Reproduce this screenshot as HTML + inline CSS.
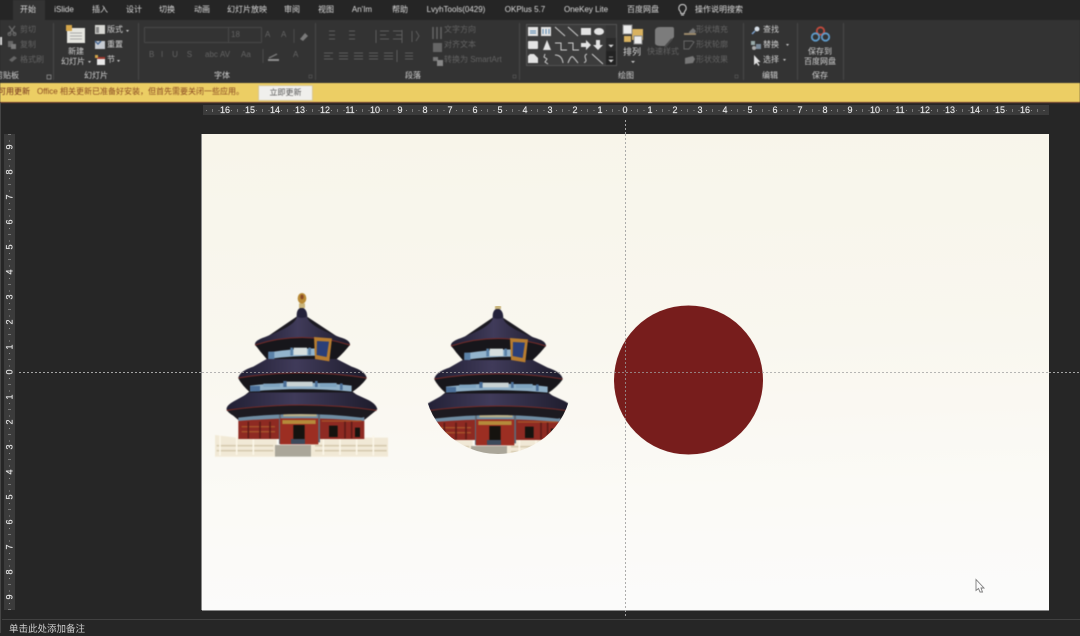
<!DOCTYPE html>
<html lang="zh">
<head>
<meta charset="utf-8">
<title>PowerPoint</title>
<style>
html,body{margin:0;padding:0;background:#262626}
body{width:1080px;height:633px;position:relative;overflow:hidden;font-family:"Liberation Sans","Noto Sans CJK SC",sans-serif;font-size:8px;color:#d2d2d2}
.abs,.t,.d,.c,.dc{position:absolute;white-space:nowrap;line-height:10px}
.d,.dc{color:#636363}
.c,.dc{transform:translateX(-50%);text-align:center}
.tab{color:#dcdcdc;top:5px}
.sep{position:absolute;top:23px;height:57px;width:1px;background:#484848}
#soft{position:absolute;left:0;top:0;width:1080px;height:103px;filter:blur(.4px)}
svg{position:absolute;left:0;top:0}
</style>
</head>
<body>
<div id="soft">
<div class="abs" style="left:0;top:0;width:1080px;height:20px;background:#252525"></div>
<div class="abs" style="left:0;top:20px;width:1080px;height:63px;background:#333"></div>
<div class="abs" style="left:13px;top:0;width:32px;height:20px;background:#333"></div>

<div class="c tab" style="left:28px">开始</div>
<div class="c tab" style="left:64px">iSlide</div>
<div class="c tab" style="left:100px">插入</div>
<div class="c tab" style="left:134px">设计</div>
<div class="c tab" style="left:167px">切换</div>
<div class="c tab" style="left:202px">动画</div>
<div class="c tab" style="left:247px">幻灯片放映</div>
<div class="c tab" style="left:292px">审阅</div>
<div class="c tab" style="left:326px">视图</div>
<div class="c tab" style="left:362px">An'Im</div>
<div class="c tab" style="left:400px">帮助</div>
<div class="c tab" style="left:456px">LvyhTools(0429)</div>
<div class="c tab" style="left:525px">OKPlus 5.7</div>
<div class="c tab" style="left:586px">OneKey Lite</div>
<div class="c tab" style="left:643px">百度网盘</div>
<div class="t tab" style="left:695px">操作说明搜索</div>

<div class="sep" style="left:53px"></div>
<div class="sep" style="left:138px"></div>
<div class="sep" style="left:315px"></div>
<div class="sep" style="left:519px"></div>
<div class="sep" style="left:743px"></div>
<div class="sep" style="left:797px"></div>
<div class="sep" style="left:843px"></div>

<!-- clipboard -->
<div class="d" style="left:20px;top:25px">剪切</div>
<div class="d" style="left:20px;top:40px">复制</div>
<div class="d" style="left:20px;top:55px">格式刷</div>
<div class="t" style="left:-5px;top:71px;color:#cfcfcf">剪贴板</div>
<!-- slides -->
<div class="c" style="left:76px;top:47px">新建</div>
<div class="t" style="left:61px;top:57px">幻灯片</div>
<div class="t" style="left:107px;top:25px">版式</div>
<div class="t" style="left:107px;top:40px">重置</div>
<div class="t" style="left:107px;top:55px">节</div>
<div class="c" style="left:96px;top:71px">幻灯片</div>
<!-- font -->
<div class="d" style="left:231px;top:30px">18</div>
<div class="d" style="left:149px;top:50px">B&nbsp;&nbsp;&nbsp;I&nbsp;&nbsp;&nbsp;&nbsp;U&nbsp;&nbsp;&nbsp;&nbsp;S</div>
<div class="d" style="left:205px;top:50px">abc</div>
<div class="d" style="left:220px;top:50px">AV</div>
<div class="d" style="left:241px;top:50px">Aa</div>
<div class="d" style="left:293px;top:50px">A</div>
<div class="d" style="left:265px;top:30px">A</div>
<div class="d" style="left:281px;top:30px">A</div>
<div class="c" style="left:222px;top:71px">字体</div>
<!-- paragraph -->
<div class="d" style="left:444px;top:25px">文字方向</div>
<div class="d" style="left:444px;top:40px">对齐文本</div>
<div class="d" style="left:444px;top:55px">转换为 SmartArt</div>
<div class="c" style="left:413px;top:71px">段落</div>
<!-- draw -->
<div class="c" style="left:632px;top:47px;font-size:9px;color:#dcdcdc">排列</div>
<div class="dc" style="left:663px;top:47px">快速样式</div>
<div class="d" style="left:696px;top:25px">形状填充</div>
<div class="d" style="left:696px;top:40px">形状轮廓</div>
<div class="d" style="left:696px;top:55px">形状效果</div>
<div class="c" style="left:626px;top:71px">绘图</div>
<!-- edit -->
<div class="t" style="left:763px;top:25px">查找</div>
<div class="t" style="left:763px;top:40px">替换</div>
<div class="t" style="left:763px;top:55px">选择</div>
<div class="c" style="left:770px;top:71px">编辑</div>
<!-- save -->
<div class="c" style="left:820px;top:47px">保存到</div>
<div class="c" style="left:820px;top:57px">百度网盘</div>
<div class="c" style="left:820px;top:71px">保存</div>

<svg width="1080" height="103" viewBox="0 0 1080 103" fill="none">
 <!-- bulb -->
 <path d="M680 11c-2-2-1.500-6.500 2.500-6.500s4.500 4.500 2.500 6.500c-.7.800-.8 1.500-.8 2.500h-3.400c0-1-.1-1.700-.8-2.500zM681 15h3" stroke="#d8d8d8" stroke-width="1"/>
 <!-- clipboard icons -->
 <path d="M9 26l6 8M15 26l-6 8" stroke="#6a6a6a" stroke-width="1.300"/>
 <circle cx="9.500" cy="34" r="1.500" stroke="#6a6a6a"/><circle cx="14.500" cy="34" r="1.500" stroke="#6a6a6a"/>
 <rect x="8" y="41" width="5" height="6" fill="#666"/><rect x="11" y="44" width="5" height="5" fill="#7a7a7a"/>
 <path d="M9 60l5-4 3 2-5 4z" fill="#666"/>
 <rect x="0" y="37" width="2" height="8" fill="#ddd"/>
 <!-- new slide -->
 <rect x="67" y="28" width="18" height="15" fill="#e6e6e0"/>
 <path d="M70 33h12M70 36h12M70 39h12" stroke="#a8a8a8"/>
 <rect x="66" y="25" width="6" height="6" fill="#d5a64a"/>
 <!-- layout etc -->
 <rect x="95" y="25" width="10" height="9" fill="#d8d8d4"/><rect x="96" y="27" width="3" height="6" fill="#888"/>
 <rect x="95" y="41" width="10" height="8" fill="#c8ccd2"/><path d="M95 41l3 3 3-3" stroke="#4a6a96" stroke-width="1.500"/>
 <rect x="97" y="57" width="8" height="8" fill="#e8e8e8"/><rect x="97" y="57" width="8" height="2" fill="#a03a30"/><rect x="95" y="55" width="3" height="3" fill="#d5a64a"/>
 <path d="M126 30h3l-1.500 2zM88 61h3l-1.500 2zM117 60h3l-1.500 2z" fill="#ccc"/>
 <!-- font inputs -->
 <rect x="144.500" y="27.500" width="117" height="15" stroke="#474747"/>
 <path d="M228.500 28v14" stroke="#474747"/>
 <path d="M294 29v14M263 49v14" stroke="#4a4a4a"/>
 <path d="M300 39l5-6 3 3-5 5z" fill="#7a7a7a"/>
 <path d="M269 58l8-4" stroke="#777" stroke-width="1.500"/><rect x="268" y="59" width="11" height="2" fill="#909090"/>
 <!-- paragraph icons -->
 <g stroke="#5c5c5c">
  <path d="M329 31h6M329 35h6M329 39h6M349 31h6M349 35h6M349 39h6"/>
  <path d="M324 53h9M324 56h6M324 59h9M339 53h9M339 56h9M339 59h9M354 53h9M354 56h9M354 59h9M369 53h9M369 56h9M369 59h9M384 53h9M384 56h9M384 59h9M405 53h8M405 56h8M405 59h8"/>
  <path d="M376 30v13M402 30v13M397 50v12" />
  <path d="M376 31h9M376 35h6M376 39h9M389 31h9M392 35h6M389 39h9" transform="translate(4 0)"/>
  <path d="M412 31v11M416 31l3 5-3 5"/>
 </g>
 <path d="M433 27v12M437 27v12M441 27v12" stroke="#666" stroke-width="1.500"/>
 <path d="M433 43h9v9h-9z" fill="#666"/>
 <rect x="433" y="57" width="5" height="4" fill="#777"/><rect x="437" y="60" width="6" height="6" fill="#888"/>
 <!-- shape gallery -->
 <rect x="526.500" y="24.500" width="90" height="41" fill="#3c3c3c" stroke="#525252"/>
 <rect x="606" y="25" width="10" height="13" fill="#363636"/>
 <rect x="606" y="38" width="10" height="13" fill="#2a2a2a"/>
 <rect x="606" y="51" width="10" height="14" fill="#222"/>
 <path d="M609 45h4l-2 2zM609 57h4M609 60h4l-2 2z" fill="#ddd" stroke="#ddd" stroke-width=".6"/>
 <g fill="#e3e3e3">
  <rect x="528" y="27" width="10" height="9"/>
  <rect x="541" y="27" width="10" height="9"/>
  <rect x="581" y="28" width="10" height="7"/>
  <ellipse cx="599" cy="31.500" rx="5" ry="3.500"/>
  <rect x="528" y="41" width="10" height="8" rx="1"/>
  <path d="M547 40l4 10h-8z"/>
  <path d="M581 43h5v-3l5 5-5 5v-3h-5zM596 40h4v5h3l-5 5-5-5h3z"/>
  <path d="M530 54h4l4 4v5h-10v-7z"/>
 </g>
 <path d="M530 31h6M530 33h6" stroke="#5a88b0"/>
 <path d="M543 29v5M546 29v5M549 29v5" stroke="#5a88b0"/>
 <path d="M555 27l10 9M568 27l10 9M555 43h6v7h6M568 43h5v7h6M555 55q7 0 8 8M568 63q3-8 5-6t5 6M587 54q-3 1-1.500 4.500t-1.500 4M592 54l11 10M545 54l-1 3 3 2-2 3 3 2" stroke="#cfcfcf"/>
 <!-- arrange -->
 <rect x="632" y="29" width="11" height="11" fill="#d9b25f" />
 <rect x="623" y="25" width="9" height="9" fill="#ececec" stroke="#888"/>
 <rect x="634" y="36" width="8" height="8" fill="#ececec" stroke="#888"/>
 <rect x="624" y="36" width="7" height="6" fill="#d9b25f"/>
 <path d="M631 61h4l-2 2z" fill="#ccc"/>
 <!-- quick styles -->
 <path d="M660 27h12q2 0 2 2v8l-8 9h-4q-7 0-7-3v-12q0-4 5-4z" fill="#7c7c7c"/>
 <path d="M665 47l7-8" stroke="#4a4a4a" stroke-width="2"/>
 <!-- shape fill etc -->
 <path d="M689 32l4-4 3 3-2 3h-5z" fill="#777"/><rect x="684" y="33" width="12" height="2" fill="#99876a"/>
 <path d="M684 41h8l2 1-5 7h-5z" stroke="#666"/>
 <path d="M685 58l8-2 2 3-2 4-8 1z" fill="#777"/>
 <!-- find etc -->
 <circle cx="757" cy="29" r="2.500" fill="#d5dde5"/><path d="M755 31l-3 3" stroke="#7aa0cc" stroke-width="1.500"/>
 <rect x="751" y="41" width="4" height="4" fill="#9aa"/><rect x="756" y="44" width="5" height="5" fill="#7a8a9a"/><circle cx="754" cy="48" r="2" fill="#aaa"/>
 <path d="M754 55v10l2.500-2 2 3 1-1-2-3h3z" fill="#e0e0e0"/>
 <path d="M786 44h3l-1.500 2zM783 59h3l-1.500 2z" fill="#ccc"/>
 <!-- baidu -->
 <circle cx="820.500" cy="31" r="3.700" stroke="#c44a3c" stroke-width="1.800"/>
 <circle cx="815.500" cy="37" r="3.700" stroke="#5f9ccc" stroke-width="1.800"/>
 <circle cx="825.500" cy="37" r="3.700" stroke="#5f9ccc" stroke-width="1.800"/>
 <!-- launchers -->
 <path d="M47 75h4v4h-4z" stroke="#999" stroke-width=".7"/>
 <path d="M309 75h3v3h-3zM513 75h3v3h-3zM735 75h3v3h-3z" stroke="#555" stroke-width=".7"/>
</svg>

<!-- update bar -->
<div class="abs" style="left:0;top:83px;width:1080px;height:19px;background:#ecce64"></div>
<div class="abs" style="left:0;top:102px;width:1080px;height:1px;background:#6e3a2e"></div>
<div class="t" style="left:-2px;top:87px;color:#6f2d1c">可用更新</div>
<div class="t" style="left:37px;top:87px;color:#8a4a22">Office 相关更新已准备好安装，但首先需要关闭一些应用。</div>
<div class="abs" style="left:258px;top:85px;background:#f0efec;border:1px solid #d9c892;color:#555;text-align:center;line-height:14px;width:53px;height:14px">立即更新</div>
</div>

<!-- left strip -->
<div class="abs" style="left:0;top:103px;width:1px;height:530px;background:#454545"></div>

<!-- slide -->
<div class="abs" style="left:202px;top:134px;width:847px;height:476px;background:linear-gradient(178deg,#f8f5ea 0%,#f9f7ef 45%,#fbfaf6 75%,#fbfbfb 100%);box-shadow:-1px 0 0 #8a8a8a,0 1px 0 #8a8a8a"></div>

<div class="abs" style="left:2px;top:619px;width:1078px;height:1px;background:#414141"></div>
<div class="t" style="left:9px;top:624px;font-size:9.500px;line-height:12px;color:#cfcfcf">单击此处添加备注</div>

<svg width="1080" height="633" viewBox="0 0 1080 633" fill="none">
 <defs>
  <pattern id="hr" x="625" y="105" width="25" height="11" patternUnits="userSpaceOnUse">
   <rect x="6" y="5" width="1" height="1" fill="#8e8e8e"/>
   <rect x="12" y="4" width="1" height="3" fill="#777"/>
   <rect x="18.500" y="5" width="1" height="1" fill="#8e8e8e"/>
  </pattern>
  <pattern id="vr" x="4" y="372" width="11" height="25" patternUnits="userSpaceOnUse">
   <rect x="5" y="6" width="1" height="1" fill="#8e8e8e"/>
   <rect x="4" y="12" width="3" height="1" fill="#777"/>
   <rect x="5" y="18.500" width="1" height="1" fill="#8e8e8e"/>
  </pattern>
  <clipPath id="circ"><circle cx="498" cy="380" r="74"/></clipPath>
  <linearGradient id="roof" x1="0" y1="0" x2="1" y2="0">
   <stop offset="0" stop-color="#211f33"/><stop offset=".45" stop-color="#403b5a"/><stop offset="1" stop-color="#1d1b2b"/>
  </linearGradient>
  <g id="temple" style="filter:blur(1.600px)">
   <!-- base behind -->
   <path d="M30 450l65 8h105l15-10v67H30zM316 448l15 10h130l88 0v57H316z" fill="#f1e9d6"/>
   <path d="M35 482h170M330 482h215M35 497h170M330 497h215" stroke="#d6cbb0" stroke-width="5"/>
   <path d="M45 452v60M95 450v60M145 450v60M355 450v60M405 450v60M455 450v60M505 452v60" stroke="#fbf6e8" stroke-width="5"/>
   <!-- silhouette backing -->
   <path d="M275 95L150 180L190 222L100 278L135 318L65 375L100 405H478L515 375L440 318L485 278L395 222L435 180L306 95z" fill="#1c1a22"/>
   <!-- lower body -->
   <path d="M100 395H478V462H100z" fill="#8e2a22"/>
   <path d="M100 388Q290 362 478 388V408Q290 392 100 408z" fill="#6f8da3"/>
   <path d="M235 374h100v20h-100z" fill="#b9b08a"/>
   <path d="M225 372v105M342 372v100" stroke="#5d6a78" stroke-width="6"/>
   <path d="M225 400h115v78h-115z" fill="#9c2e22"/>
   <path d="M232 405h100v12h-100z" fill="#b58a3a"/>
   <path d="M265 420h34v56h-34zM372 422h26v34h-26zM450 428h15v28h-15z" fill="#15130f"/>
   <path d="M110 425h100M110 440h100M350 408h120" stroke="#a8552a" stroke-width="4"/>
   <path d="M130 410v50M165 410v50M195 410v50M420 410v50M440 410v50" stroke="#5f1c18" stroke-width="5"/>
   <path d="M258 462h42v15h-42z" fill="#3c4a5c"/>
   <path d="M210 480h108v35H210z" fill="#aaa699"/>
   <!-- soffit 3 + roof 3 -->
   <path d="M65 375Q290 345 515 375Q490 395 470 398Q290 376 100 398Q75 390 65 375z" fill="#1c1a20"/>
   <path d="M135 322H440L490 345Q515 358 517 374Q290 345 65 374Q62 362 90 347z" fill="url(#roof)"/>
   <path d="M65 376Q290 344 515 376" stroke="#742b28" stroke-width="3"/>
   <!-- band 2 -->
   <path d="M100 280Q290 250 485 280Q470 302 440 322L135 322Q110 300 100 280z" fill="#17161b"/>
   <path d="M135 302Q290 284 440 302V320Q290 305 135 320z" fill="#8fb0c8"/>
   <path d="M135 303h30v16h-30zM235 288h10v18h-10zM330 288h8v18h-8zM405 295h8v20h-8z" fill="#4c7099"/>
   <path d="M245 290h78v14h-78z" fill="#c9d3d4"/>
   <path d="M175 296h50v10h-50zM345 294h50v12h-50z" fill="#7fa4c0"/>
   <!-- roof 2 -->
   <path d="M185 222H395L440 245Q480 258 485 278Q290 248 100 278Q105 258 145 245z" fill="url(#roof)"/>
   <path d="M100 279Q290 248 485 279" stroke="#742b28" stroke-width="3"/>
   <!-- band 1 -->
   <path d="M150 178Q290 135 435 178Q420 200 395 222H185Q165 200 150 178z" fill="#17161b"/>
   <path d="M190 202Q265 190 340 190V212Q265 212 190 222z" fill="#93b4cc"/>
   <path d="M190 200h18v22h-18zM256 188h8v24h-8zM310 188h8v22h-8z" fill="#5b82a8"/>
   <path d="M266 188h40v22h-40z" fill="#d5dede"/>
   <!-- roof 1 -->
   <path d="M276 95C270 125 200 148 165 162Q148 170 150 180Q290 135 435 180Q436 170 420 162C380 148 312 125 306 95z" fill="url(#roof)"/>
   <path d="M150 180Q290 135 435 180" stroke="#742b28" stroke-width="3"/>
   <path d="M275 95Q274 70 290 68Q306 70 307 95Q290 102 275 95z" fill="#24223a"/>
   <rect x="282" y="55" width="18" height="14" fill="#c9b47a"/>
   <ellipse cx="291" cy="40" rx="13" ry="16" fill="#b98a36"/>
   <ellipse cx="291" cy="36" rx="5" ry="7" fill="#8a4a24"/>
   <!-- plaque -->
   <path d="M327 156L381 160L373 229L330 222z" fill="#b67c30"/>
   <path d="M336 168L372 170L365 216L335 210z" fill="#2b3f78"/>
  </g>
 </defs>

 <!-- rulers -->
 <rect x="203" y="105" width="846" height="10" fill="#3b3b3b"/>
 <rect x="203" y="105" width="846" height="10" fill="url(#hr)"/>
 <rect x="4" y="134" width="11" height="476" fill="#3b3b3b"/>
 <rect x="4" y="134" width="11" height="476" fill="url(#vr)"/>
 <g font-family="'Liberation Sans',sans-serif" font-size="9" fill="#e8e8e8" stroke="#e8e8e8" stroke-width=".15" text-anchor="middle">
  <text x="225" y="113">16</text><text x="250" y="113">15</text><text x="275" y="113">14</text><text x="300" y="113">13</text><text x="325" y="113">12</text><text x="350" y="113">11</text><text x="375" y="113">10</text><text x="400" y="113">9</text><text x="425" y="113">8</text><text x="450" y="113">7</text><text x="475" y="113">6</text><text x="500" y="113">5</text><text x="525" y="113">4</text><text x="550" y="113">3</text><text x="575" y="113">2</text><text x="600" y="113">1</text><text x="625" y="113">0</text><text x="650" y="113">1</text><text x="675" y="113">2</text><text x="700" y="113">3</text><text x="725" y="113">4</text><text x="750" y="113">5</text><text x="775" y="113">6</text><text x="800" y="113">7</text><text x="825" y="113">8</text><text x="850" y="113">9</text><text x="875" y="113">10</text><text x="900" y="113">11</text><text x="925" y="113">12</text><text x="950" y="113">13</text><text x="975" y="113">14</text><text x="1000" y="113">15</text><text x="1025" y="113">16</text>
  <text transform="translate(12.500 147) rotate(-90)">9</text><text transform="translate(12.500 172) rotate(-90)">8</text><text transform="translate(12.500 197) rotate(-90)">7</text><text transform="translate(12.500 222) rotate(-90)">6</text><text transform="translate(12.500 247) rotate(-90)">5</text><text transform="translate(12.500 272) rotate(-90)">4</text><text transform="translate(12.500 297) rotate(-90)">3</text><text transform="translate(12.500 322) rotate(-90)">2</text><text transform="translate(12.500 347) rotate(-90)">1</text><text transform="translate(12.500 372) rotate(-90)">0</text><text transform="translate(12.500 397) rotate(-90)">1</text><text transform="translate(12.500 422) rotate(-90)">2</text><text transform="translate(12.500 447) rotate(-90)">3</text><text transform="translate(12.500 472) rotate(-90)">4</text><text transform="translate(12.500 497) rotate(-90)">5</text><text transform="translate(12.500 522) rotate(-90)">6</text><text transform="translate(12.500 547) rotate(-90)">7</text><text transform="translate(12.500 572) rotate(-90)">8</text><text transform="translate(12.500 597) rotate(-90)">9</text>
 </g>

 <!-- temples -->
 <g transform="translate(205 285) scale(.3333)"><use href="#temple"/></g>
 <g clip-path="url(#circ)"><g transform="translate(401 286) scale(.3333)"><use href="#temple"/></g></g>
 <circle cx="688.500" cy="380" r="74.500" fill="#771d1c"/>

 <!-- guides -->
 <path d="M19 372.500H202" stroke="#a5a5a5" stroke-width="1" stroke-dasharray="2 2"/>
 <path d="M202 372.500H1049" stroke="#a0a0a0" stroke-width=".8" stroke-dasharray="2 2"/>
 <path d="M1049 372.500H1080" stroke="#a5a5a5" stroke-width="1" stroke-dasharray="2 2"/>
 <path d="M625.500 120V134" stroke="#a5a5a5" stroke-dasharray="2 2"/>
 <path d="M625.500 134V610" stroke="#9a9a9a" stroke-width=".8" stroke-dasharray="2 2"/>
 <path d="M625.500 610V617" stroke="#a5a5a5" stroke-dasharray="2 2"/>

 <!-- cursor -->
 <path d="M976 579.500V590.500L978.500 588.500L980 592H982.500L981 588H984z" fill="#fafafa" stroke="#7d7d7d" stroke-width=".9"/>
</svg>
</body>
</html>
